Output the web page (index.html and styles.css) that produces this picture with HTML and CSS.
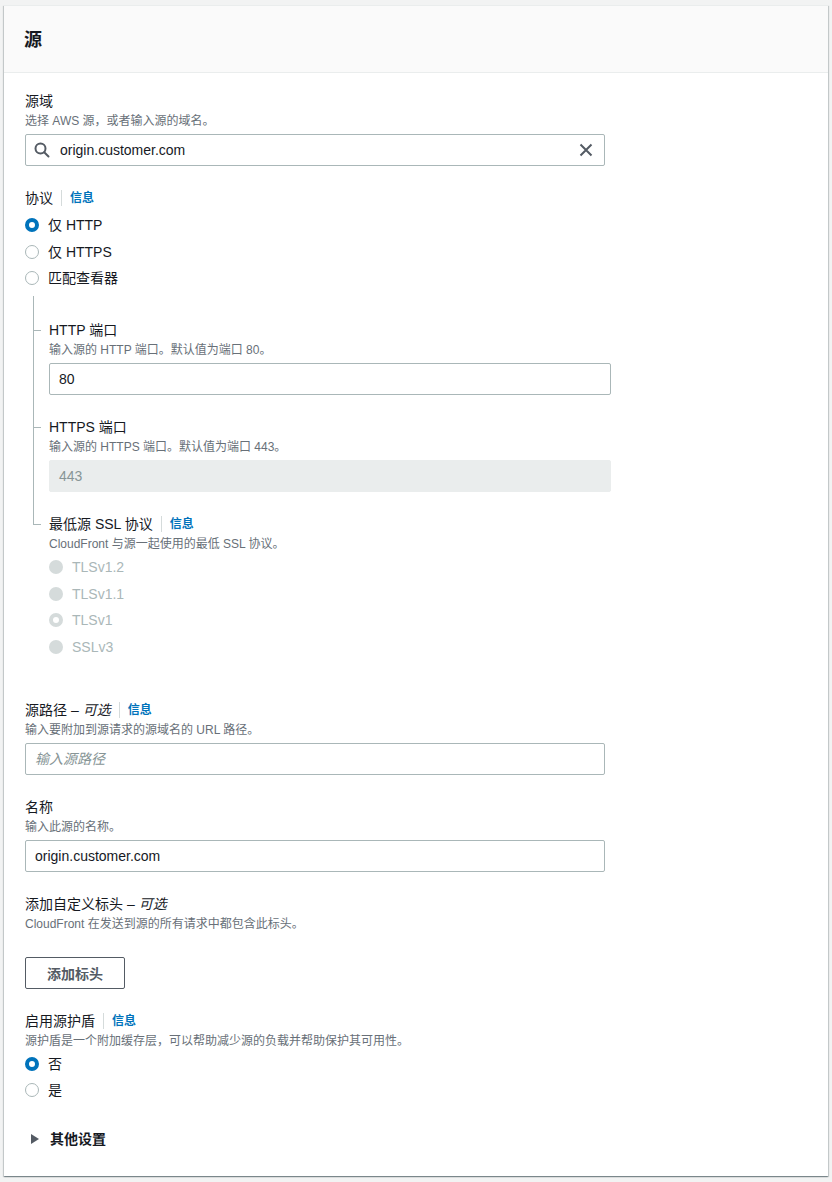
FILE: index.html
```html
<!DOCTYPE html>
<html lang="zh-CN">
<head>
    <meta charset="UTF-8">
    <meta name="viewport" content="width=device-width, initial-scale=1.0">
    <title>源</title>
    <link rel="stylesheet" href="styles.css">
</head>
<body>

    <div class="container">
        <header class="container-header">
            <h2>源</h2>
        </header>

        <div class="container-body">

            <!-- Origin domain -->
            <div class="field">
                <div class="label">源域</div>
                <div class="desc">选择 AWS 源，或者输入源的域名。</div>
                <div class="input search">
                    <svg class="search-icon" width="16" height="16" viewBox="0 0 16 16">
                        <circle cx="6.5" cy="6.5" r="5" fill="none" stroke="#545b64" stroke-width="2"/>
                        <line x1="10.2" y1="10.2" x2="14.5" y2="14.5" stroke="#545b64" stroke-width="2" stroke-linecap="round"/>
                    </svg>
                    <span class="value">origin.customer.com</span>
                    <svg class="clear-icon" width="14" height="14" viewBox="0 0 14 14">
                        <path d="M1.5 1.5 L12.5 12.5 M12.5 1.5 L1.5 12.5" stroke="#545b64" stroke-width="2" fill="none"/>
                    </svg>
                </div>
            </div>

            <!-- Protocol -->
            <div class="field field-protocol">
                <div class="label">协议<a class="info" href="#">信息</a></div>
                <div class="radio-group after-label">
                    <div class="radio checked"><span class="dot"></span>仅 HTTP</div>
                    <div class="radio"><span class="dot"></span>仅 HTTPS</div>
                    <div class="radio"><span class="dot"></span>匹配查看器</div>
                </div>

                <div class="nested">
                    <div class="nested-item first">
                        <div class="label">HTTP 端口</div>
                        <div class="desc">输入源的 HTTP 端口。默认值为端口 80。</div>
                        <div class="input nested-input"><span class="value">80</span></div>
                    </div>
                    <div class="nested-item">
                        <div class="label">HTTPS 端口</div>
                        <div class="desc">输入源的 HTTPS 端口。默认值为端口 443。</div>
                        <div class="input nested-input disabled"><span class="value">443</span></div>
                    </div>
                    <div class="nested-item">
                        <div class="label">最低源 SSL 协议<a class="info" href="#">信息</a></div>
                        <div class="desc">CloudFront 与源一起使用的最低 SSL 协议。</div>
                        <div class="radio-group after-desc">
                            <div class="radio disabled"><span class="dot"></span>TLSv1.2</div>
                            <div class="radio disabled"><span class="dot"></span>TLSv1.1</div>
                            <div class="radio disabled checked"><span class="dot"></span>TLSv1</div>
                            <div class="radio disabled"><span class="dot"></span>SSLv3</div>
                        </div>
                    </div>
                </div>
            </div>

            <!-- Origin path -->
            <div class="field">
                <div class="label">源路径 – <i>可选</i><a class="info" href="#">信息</a></div>
                <div class="desc">输入要附加到源请求的源域名的 URL 路径。</div>
                <div class="input"><span class="placeholder">输入源路径</span></div>
            </div>

            <!-- Name -->
            <div class="field">
                <div class="label">名称</div>
                <div class="desc">输入此源的名称。</div>
                <div class="input"><span class="value">origin.customer.com</span></div>
            </div>

            <!-- Custom headers -->
            <div class="field">
                <div class="label">添加自定义标头 – <i>可选</i></div>
                <div class="desc">CloudFront 在发送到源的所有请求中都包含此标头。</div>
                <button class="btn">添加标头</button>
            </div>

            <!-- Origin shield -->
            <div class="field">
                <div class="label">启用源护盾<a class="info" href="#">信息</a></div>
                <div class="desc">源护盾是一个附加缓存层，可以帮助减少源的负载并帮助保护其可用性。</div>
                <div class="radio-group after-desc">
                    <div class="radio checked"><span class="dot"></span>否</div>
                    <div class="radio"><span class="dot"></span>是</div>
                </div>
            </div>

            <!-- Additional settings -->
            <div class="expander">
                <svg class="caret" width="8" height="10" viewBox="0 0 8 10">
                    <path d="M0 0 L8 5 L0 10 Z" fill="#545b64"/>
                </svg>
                <span>其他设置</span>
            </div>

        </div>
    </div>

</body>
</html>
```

FILE: styles.css
```css
/* Global Styles */
body {
    font-family: "Liberation Sans", "Noto Sans CJK SC", sans-serif;
    font-size: 14px;
    line-height: 22px;
    color: #16191f;
    margin: 0;
    padding: 5px 4px 4px;
    background-color: #f2f3f3;
}

/* Container */
.container {
    background-color: #fff;
    border-top: 1px solid #eaeded;
    box-shadow: 0 1px 1px 0 rgba(0, 28, 36, 0.3), 1px 1px 1px 0 rgba(0, 28, 36, 0.15), -1px 1px 1px 0 rgba(0, 28, 36, 0.15);
}

.container-header {
    background-color: #fafafa;
    border-bottom: 1px solid #eaeded;
    padding: 23px 20px 21px;
}

.container-header h2 {
    margin: 0;
    font-size: 18px;
    line-height: 22px;
    font-weight: bold;
}

.container-body {
    padding: 17px 20px 26px 21px;
}

/* Form fields */
.field {
    margin-bottom: 21px;
}

.label {
    display: flex;
    align-items: center;
    font-size: 14px;
    line-height: 22px;
}

.label i {
    margin-left: 4px;
}

.info {
    font-size: 12px;
    font-weight: bold;
    color: #0073bb;
    text-decoration: none;
    line-height: 16px;
    margin-left: 8px;
    padding-left: 8px;
    border-left: 1px solid #d5dbdb;
}

.desc {
    font-size: 12px;
    line-height: 18px;
    color: #687078;
}

.input {
    display: flex;
    align-items: center;
    box-sizing: border-box;
    width: 580px;
    height: 32px;
    margin-top: 4px;
    padding: 0 9px;
    border: 1px solid #aab7b8;
    border-radius: 2px;
    font-size: 14px;
}

.input.search {
    padding-left: 8px;
}

.search-icon {
    margin-right: 10px;
}

.search .value {
    flex: 1;
}

.clear-icon {
    margin-right: 2px;
}

.placeholder {
    color: #879596;
    font-style: italic;
}

.nested-input {
    width: 562px;
}

.input.disabled {
    background-color: #eaeded;
    border-color: #eaeded;
    color: #879596;
}

/* Radios */
.radio-group.after-label {
    margin-top: 5px;
}

.radio-group.after-desc {
    margin-top: 3px;
}

.radio {
    display: flex;
    align-items: center;
    line-height: 22px;
    margin-bottom: 4.5px;
}

.radio:last-child {
    margin-bottom: 0;
}

.dot {
    box-sizing: border-box;
    width: 14px;
    height: 14px;
    border-radius: 50%;
    border: 1.5px solid #aab7b8;
    background-color: #fff;
    margin-right: 9px;
}

.radio.checked .dot {
    border: 4px solid #0073bb;
}

.radio.disabled {
    color: #aab7b8;
}

.radio.disabled .dot {
    border: none;
    background-color: #d5dbdb;
}

.radio.disabled.checked .dot {
    border: 4px solid #d5dbdb;
    background-color: #fff;
}

/* Nested settings with tree lines */
.nested {
    margin: 7px 0 0 8px;
    padding: 0 0 20px 16px;
}

.nested-item {
    position: relative;
    padding-top: 21px;
}

.nested-item.first {
    padding-top: 23px;
}

.nested-item::before {
    content: '';
    position: absolute;
    left: -16px;
    top: 0;
    bottom: 0;
    border-left: 1px solid #aab7b8;
}

.nested-item:last-child::before {
    bottom: auto;
    height: 32px;
}

.nested-item::after {
    content: '';
    position: absolute;
    left: -16px;
    top: 32px;
    width: 8px;
    border-top: 1px solid #aab7b8;
}

.nested-item.first::after {
    top: 34px;
}

/* Button */
.btn {
    display: block;
    margin-top: 24px;
    height: 32px;
    padding: 0 21px;
    background-color: #fff;
    border: 1px solid #545b64;
    border-radius: 2px;
    color: #545b64;
    font-family: inherit;
    font-size: 14px;
    font-weight: bold;
    cursor: pointer;
}

/* Expandable section */
.expander {
    display: flex;
    align-items: center;
    margin-top: 27px;
    font-weight: bold;
    color: #16191f;
}

.caret {
    margin: 0 11px 0 6px;
}
```
